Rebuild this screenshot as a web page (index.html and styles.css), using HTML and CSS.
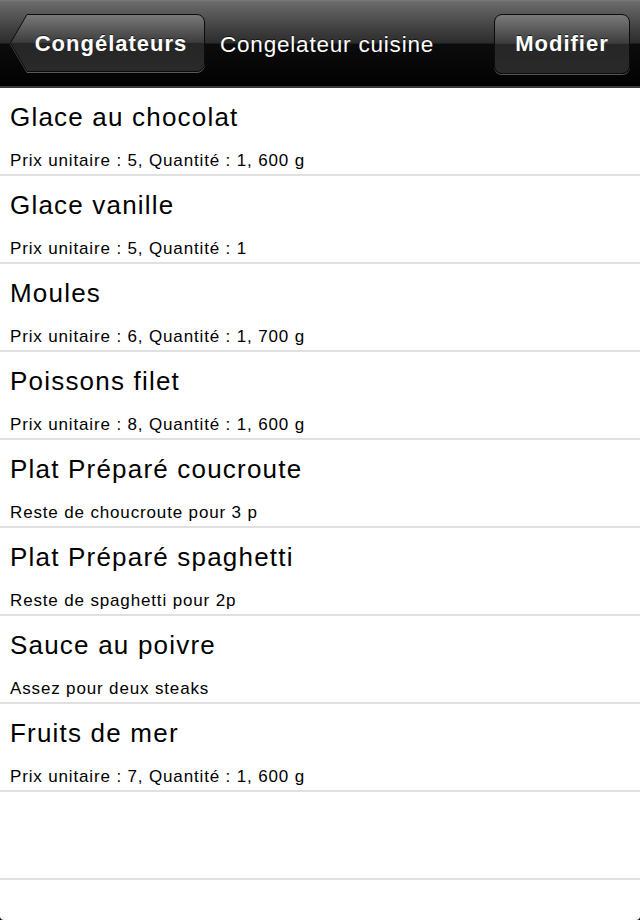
FILE: index.html
```html
<!DOCTYPE html>
<html lang="fr">
<head>
<meta charset="utf-8">
<title>Congelateur cuisine</title>
<link rel="stylesheet" href="styles.css">
</head>
<body>
<div class="screen">
  <header class="navbar">
    <div class="btn back">
      <svg class="btn-bg" width="196" height="60" viewBox="0 0 196 60">
        <defs>
          <linearGradient id="gb" x1="0" y1="0" x2="0" y2="1">
            <stop offset="0" stop-color="#7a7a7a"/>
            <stop offset="0.49" stop-color="#3c3c3c"/>
            <stop offset="0.5" stop-color="#262626"/>
            <stop offset="1" stop-color="#2a2a2a"/>
          </linearGradient>
        </defs>
        <path d="M17 1.5 H187 A7.5 7.5 0 0 1 194.5 9 V51 A7.5 7.5 0 0 1 187 58.5 H17 L1 31 Q0.5 30 1 29 Z" fill="#4a4a4a" stroke="#5a5a5a" stroke-width="1"/>
        <path d="M17 0.5 H187 A7.5 7.5 0 0 1 194.5 8 V50 A7.5 7.5 0 0 1 187 57.5 H17 L1 30 Q0.5 29 1 28 Z" fill="url(#gb)" stroke="#0c0c0c" stroke-width="1"/>
      </svg>
      <span class="btn-label">Congélateurs</span>
    </div>
    <h1 class="title">Congelateur cuisine</h1>
    <div class="btn edit">
      <span class="btn-label">Modifier</span>
    </div>
  </header>
  <ul class="list">
    <li class="row"><span class="name">Glace au chocolat</span><span class="detail">Prix unitaire : 5, Quantité : 1, 600 g</span></li>
    <li class="row"><span class="name">Glace vanille</span><span class="detail">Prix unitaire : 5, Quantité : 1</span></li>
    <li class="row"><span class="name">Moules</span><span class="detail">Prix unitaire : 6, Quantité : 1, 700 g</span></li>
    <li class="row"><span class="name">Poissons filet</span><span class="detail">Prix unitaire : 8, Quantité : 1, 600 g</span></li>
    <li class="row"><span class="name">Plat Préparé coucroute</span><span class="detail">Reste de choucroute pour 3 p</span></li>
    <li class="row"><span class="name">Plat Préparé spaghetti</span><span class="detail">Reste de spaghetti pour 2p</span></li>
    <li class="row"><span class="name">Sauce au poivre</span><span class="detail">Assez pour deux steaks</span></li>
    <li class="row"><span class="name">Fruits de mer</span><span class="detail">Prix unitaire : 7, Quantité : 1, 600 g</span></li>
    <li class="row empty"></li>
  </ul>
</div>
</body>
</html>
```

FILE: styles.css
```css
html, body {
  margin: 0;
  padding: 0;
  background: #000;
}

body {
  width: 640px;
  height: 920px;
  overflow: hidden;
  font-family: "Liberation Sans", Arial, sans-serif;
}

.screen {
  width: 640px;
  height: 920px;
  background: #fff;
  border-radius: 0 0 4px 4px;
  overflow: hidden;
}

.navbar {
  height: 86px;
  border-bottom: 2px solid #3a3a3a;
  display: flex;
  align-items: center;
  padding: 0 10px;
  background: linear-gradient(to bottom, #7a7a7a 0px, #6a6a6a 2px, #3e3e3e 30px, #2c2c2c 43px, #0c0c0c 44px, #020202 86px);
}

.btn {
  height: 60px;
  position: relative;
  display: flex;
  align-items: center;
  justify-content: center;
  box-sizing: border-box;
  margin-top: 1px;
}

.btn-label {
  position: relative;
  color: #fff;
  font-weight: bold;
  font-size: 22px;
  letter-spacing: 1px;
  text-shadow: 0 -1px 0 rgba(0, 0, 0, 0.6);
}

.back {
  width: 196px;
  padding-left: 6px;
}

.btn-bg {
  position: absolute;
  left: 0;
  top: 0;
}

.title {
  margin: 3px 0 0 14px;
  color: #fff;
  font-weight: normal;
  font-size: 22.5px;
  letter-spacing: 0.8px;
  text-shadow: 0 -1px 0 rgba(0, 0, 0, 0.6);
}

.edit {
  margin-left: auto;
  width: 136px;
  border: 1px solid #0c0c0c;
  border-radius: 8px;
  background: linear-gradient(to bottom, #7a7a7a 0%, #3c3c3c 49%, #262626 50%, #2a2a2a 100%);
  box-shadow: 0 1px 0 #555;
}

.list {
  list-style: none;
  margin: 0;
  padding: 0;
}

.row {
  border-bottom: 2px solid #e0e0e0;
  display: flex;
  flex-direction: column;
  padding: 14px 0 0 10px;
  box-sizing: content-box;
  height: 72px;
}

.name {
  font-size: 26px;
  line-height: 30px;
  letter-spacing: 1.2px;
  color: #000;
}

.detail {
  margin-top: 19px;
  font-size: 17px;
  line-height: 20px;
  letter-spacing: 0.85px;
  color: #000;
}
```
